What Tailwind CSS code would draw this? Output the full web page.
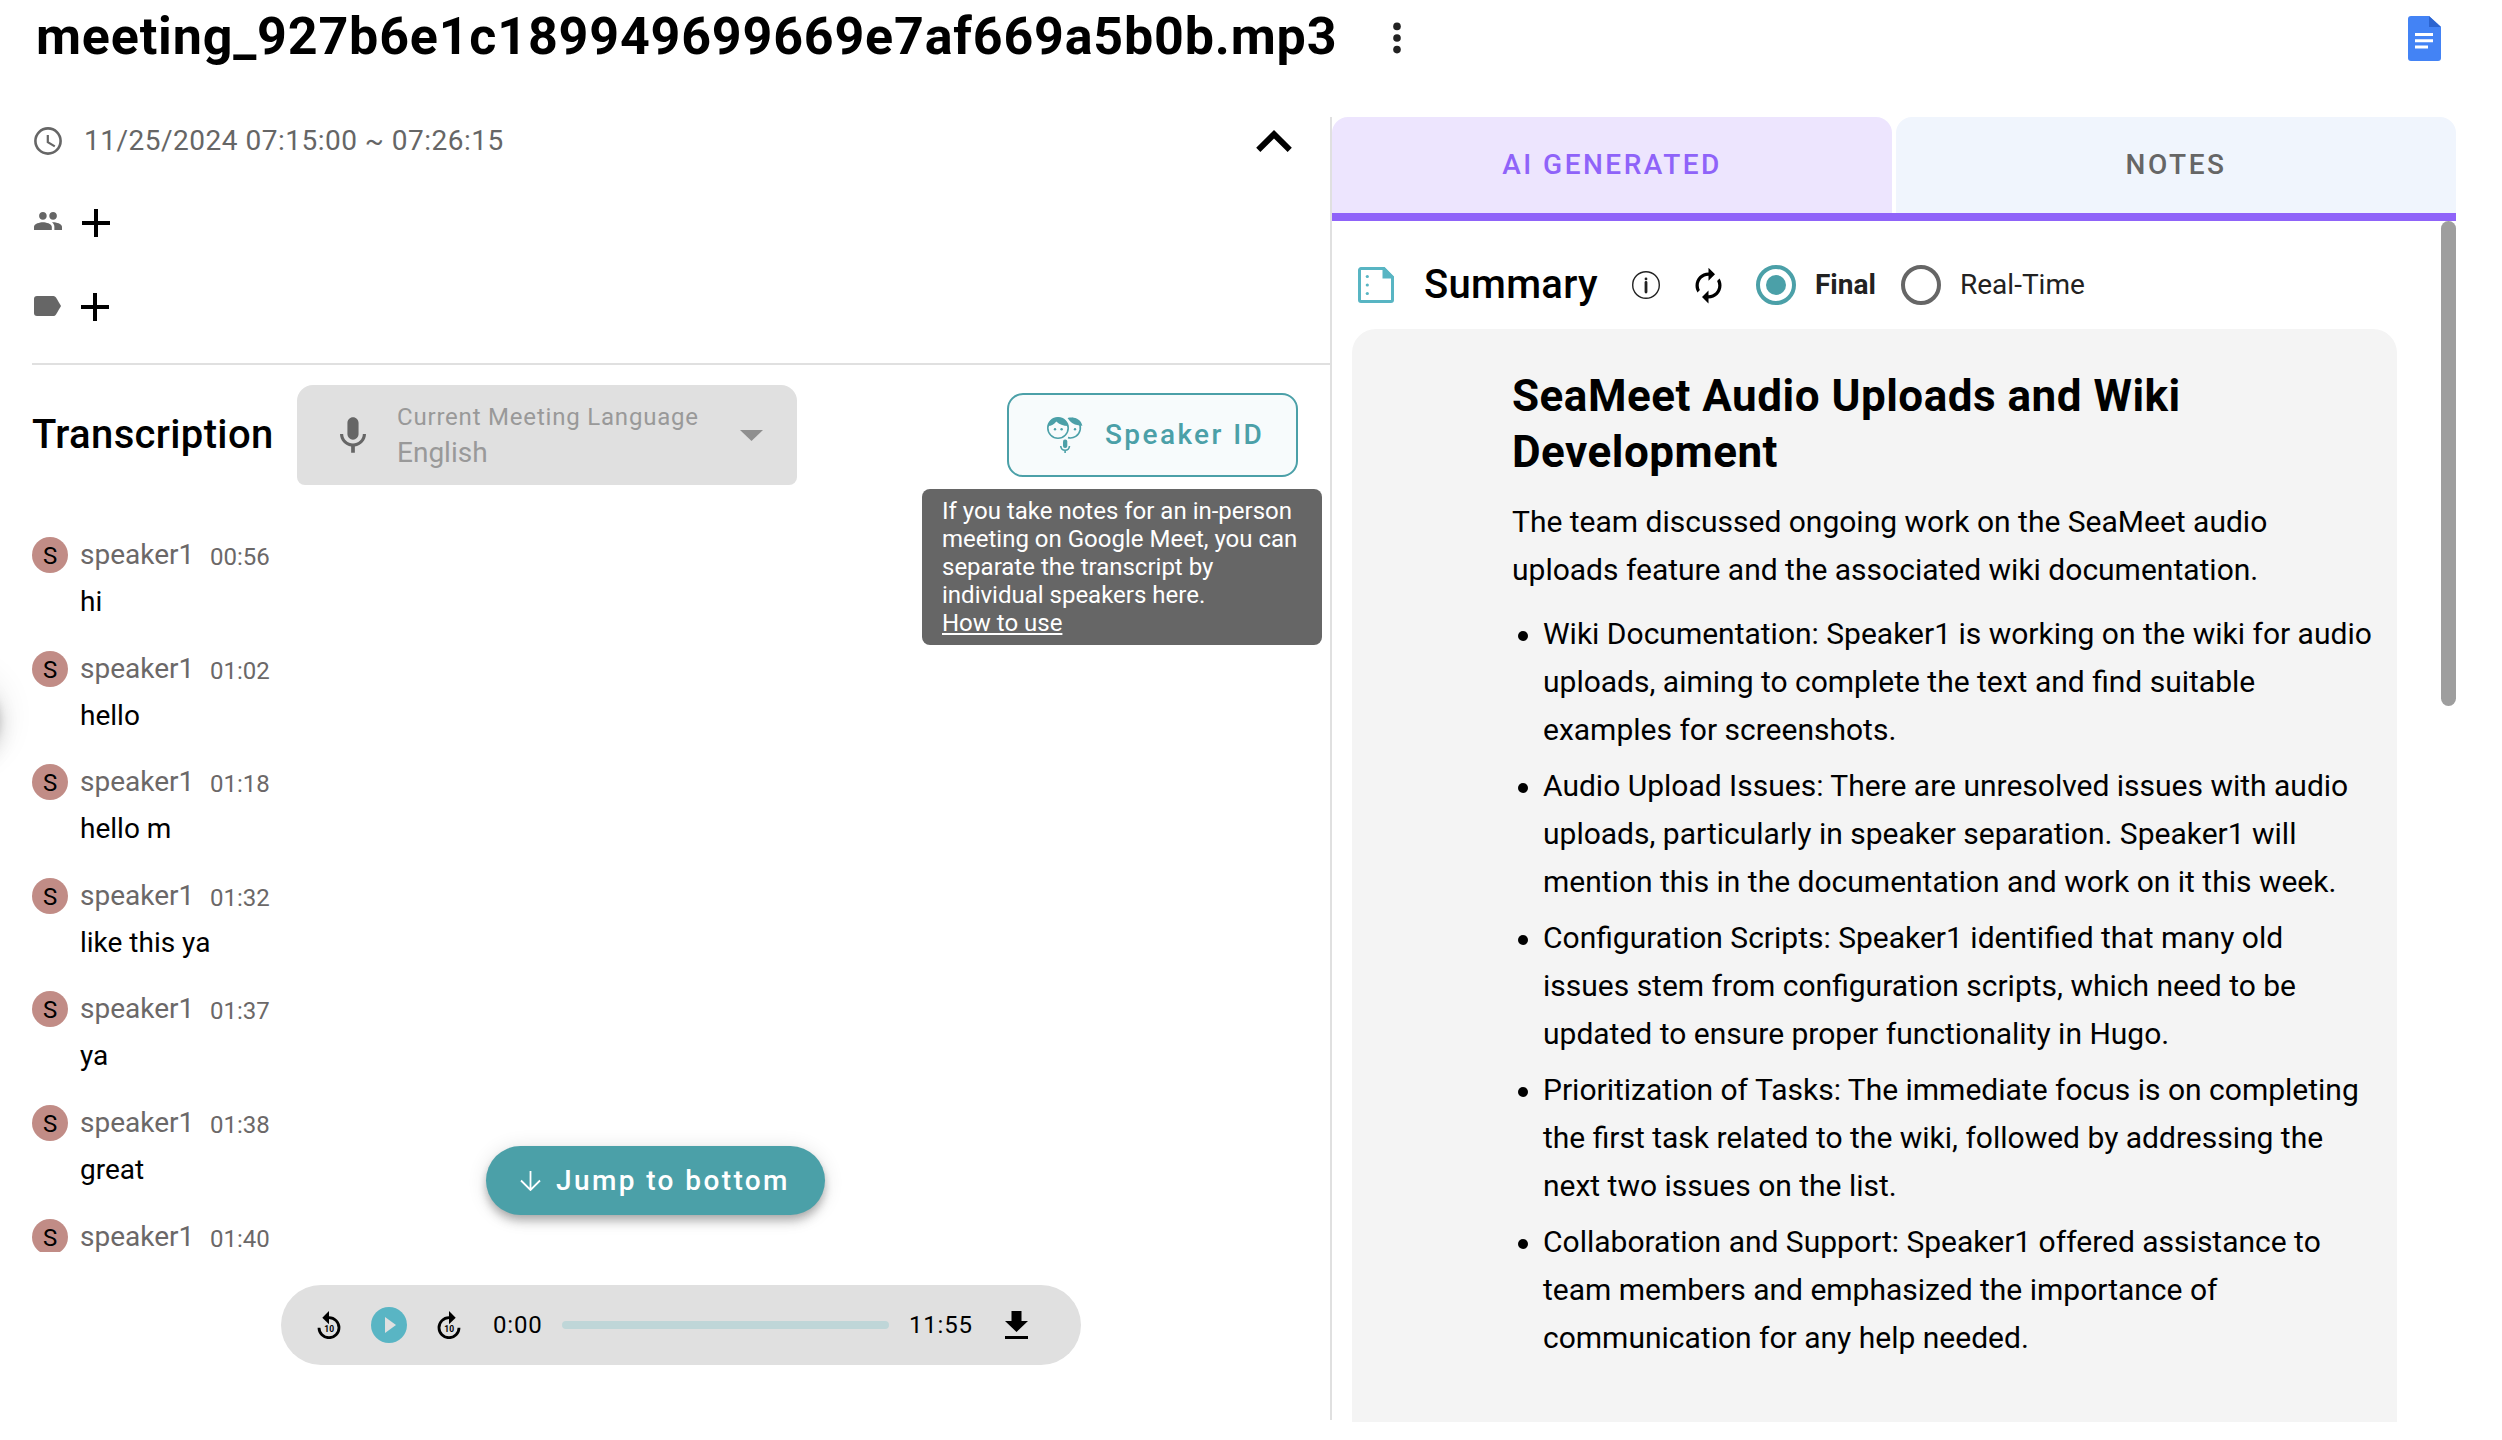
<!DOCTYPE html>
<html lang="en">
<head>
<meta charset="utf-8">
<title>SeaMeet</title>
<script src="https://cdn.jsdelivr.net/npm/@tailwindcss/browser@4"></script>
</head>
<body class="relative h-[1440px] w-[2502px] overflow-hidden bg-white font-[Roboto,sans-serif] text-black">

<!-- Header -->
<header class="flex h-[117px] items-start pl-9 pr-[61px]">
  <div class="flex h-[74px] w-full items-center">
    <h1 class="text-[52px] leading-[60px] font-bold tracking-[0.82px] whitespace-nowrap">meeting_927b6e1c189949699669e7af669a5b0b.mp3</h1>
    <svg class="mt-0.5 ml-9 size-12 fill-[#222]" viewBox="0 0 24 24"><circle cx="12" cy="6.2" r="1.9"/><circle cx="12" cy="12" r="1.9"/><circle cx="12" cy="17.8" r="1.9"/></svg>
    <svg class="mt-0.5 ml-auto h-[45px] w-[33px]" viewBox="0 0 33 45"><path d="M3 0H21L33 11V42a3 3 0 0 1-3 3H3a3 3 0 0 1-3-3V3a3 3 0 0 1 3-3z" fill="#4383f5"/><path d="M21 0L33 11H21z" fill="#2c64d0"/><path d="M7 18.5H25M7 24.7H25M7 31H20" stroke="#fff" stroke-width="3"/></svg>
  </div>
</header>

<div class="flex items-start">
  <!-- Left column -->
  <main class="h-[1303px] w-[1332px] shrink-0 border-r-2 border-[#e0e0e0]">
    <section class="ml-8 h-[248px] border-b-2 border-[#e0e0e0] pl-0.5">
      <div class="flex h-12 items-center pr-[38px]">
        <svg class="size-7" viewBox="0 0 28 28" fill="none" stroke="#666" stroke-width="2.6"><circle cx="14" cy="14" r="12.6"/><path d="M13.8 8v7.2l7 4.2" stroke-width="2.2"/></svg>
        <span class="ml-[22px] text-[28px] leading-10 tracking-[0.5px] text-[#666]">11/25/2024 07:15:00 ~ 07:26:15</span>
        <svg class="ml-auto h-[22px] w-9" viewBox="6 8 12 7.41"><path d="M12 8l-6 6 1.41 1.41L12 10.83l4.59 4.58L18 14z"/></svg>
      </div>
      <div class="mt-7 flex h-14 items-center">
        <svg class="h-[18px] w-7" viewBox="1 5 22 14" fill="#666"><path d="M16 11c1.66 0 2.99-1.34 2.99-3S17.66 5 16 5s-3 1.34-3 3 1.34 3 3 3zm-8 0c1.66 0 2.99-1.34 2.99-3S9.66 5 8 5 5 6.34 5 8s1.340 3 3 3zm0 2c-2.33 0-7 1.17-7 3.500V19h14v-2.500c0-2.330-4.670-3.500-7-3.500zm8 0c-.29 0-.62.02-.97.05 1.160.84 1.970 1.970 1.970 3.450V19h6v-2.500c0-2.330-4.670-3.500-7-3.500z"/></svg>
        <svg class="mt-1 ml-5 size-7" viewBox="0 0 28 28" stroke="#000" stroke-width="4"><path d="M14 0v28M0 14h28"/></svg>
      </div>
      <div class="mt-[29px] flex h-14 items-center">
        <svg class="h-5 w-[27px]" viewBox="0 0 27 20" fill="#666"><path d="M3 0h16.500q1.500 0 2.500 1.500L27 10l-5 8.500q-1 1.500-2.500 1.500H3a3 3 0 0 1-3-3V3a3 3 0 0 1 3-3z"/></svg>
        <svg class="mt-0.5 ml-5 size-7" viewBox="0 0 28 28" stroke="#000" stroke-width="4"><path d="M14 0v28M0 14h28"/></svg>
      </div>
    </section>

    <section class="flex h-[140px] items-center pr-8 pl-8">
      <h2 class="w-[265px] text-[40px] leading-[56px] font-medium tracking-[0.35px]">Transcription</h2>
      <div class="flex h-[100px] w-[500px] items-center rounded-t-2xl rounded-b-lg bg-[#e0e0e0] pr-[34px] pl-[43px]">
        <svg class="h-9 w-[26px]" viewBox="5 2 14 19" fill="#666"><path d="M12 14c1.660 0 2.990-1.340 2.990-3L15 5c0-1.660-1.340-3-3-3S9 3.340 9 5v6c0 1.660 1.340 3 3 3zm5.300-3c0 3-2.540 5.100-5.300 5.100S6.700 14 6.700 11H5c0 3.410 2.720 6.230 6 6.720V21h2v-3.280c3.280-.48 6-3.300 6-6.720h-1.700z"/></svg>
        <div class="ml-[31px] text-[#999]">
          <div class="text-2xl leading-9 tracking-[0.8px]">Current Meeting Language</div>
          <div class="text-[28px] leading-9">English</div>
        </div>
        <svg class="ml-auto h-[11px] w-[23px] fill-[#8f8f8f]" viewBox="0 0 23 11"><path d="M0 0h23L11.500 11z"/></svg>
      </div>
      <button class="ml-auto flex h-[84px] w-[291px] items-center rounded-2xl border-2 border-[#4ba0a8] bg-[#f7fbfc] pl-[38px] text-[#4ba0a8]">
        <svg class="size-9 shrink-0" viewBox="0 0 36 36" fill="none" stroke="currentColor" stroke-width="1.6">
          <circle cx="11" cy="11" r="10.200"/>
          <path d="M24.800 1.200A9.900 9.900 0 1 1 21 20.600"/>
          <path d="M.8 9C2 3.500 6 .4 11 .4S20 3.800 21.300 9C16 9 12.500 7.300 9.300 4.500 7.500 7 4.500 9 .8 9zM20.500 1C28-.8 34 2.500 35.400 8.700 30 8.800 25.500 6.800 22.800 4z" fill="currentColor" stroke="none"/>
          <g fill="currentColor" stroke="none"><circle cx="8" cy="12.300" r="1.200"/><circle cx="14.600" cy="12.300" r="1.200"/><circle cx="28" cy="12.300" r="1.200"/><rect x="16" y="22.500" width="4.300" height="8.500" rx="2"/></g>
          <path d="M13.700 29c.3 2.700 2 4.300 4.400 4.300s4.100-1.600 4.400-4.300M18.100 33.300V36"/>
        </svg>
        <span class="ml-[22px] text-[28px] leading-10 font-medium tracking-[2.4px] whitespace-nowrap">Speaker ID</span>
      </button>
    </section>

    <!-- Transcript list, cut off at the scroll edge -->
    <section id="transcript" class="ml-8 h-[747px] overflow-hidden pt-8"></section>

    <!-- Audio player -->
    <section class="mt-[33px] ml-[281px] flex h-20 w-[800px] items-center rounded-full bg-[#e0e0e0] pl-9">
      <svg class="h-7 w-6" viewBox="0 0 24 28"><path d="M2 16.700A10 10 0 1 0 12 6.700" fill="none" stroke="#000" stroke-width="2.800"/><path d="M5.300 6.700L12 0v13.300z"/><text x="12.200" y="20.700" text-anchor="middle" font-size="8.500" font-weight="700">10</text></svg>
      <svg class="ml-[30px] size-9" viewBox="0 0 36 36"><circle cx="18" cy="18" r="18" fill="#59b5c4"/><path d="M14 10v16l11-8z" fill="#e0e0e0"/></svg>
      <svg class="ml-[30px] h-7 w-6" viewBox="0 0 24 28"><path d="M22 16.700A10 10 0 1 1 12 6.700" fill="none" stroke="#000" stroke-width="2.800"/><path d="M18.700 6.700L12 0v13.300z"/><text x="12.200" y="20.700" text-anchor="middle" font-size="8.500" font-weight="700">10</text></svg>
      <span class="ml-8 w-[69px] text-2xl tracking-[0.8px]">0:00</span>
      <div class="h-2 w-[327px] rounded-full bg-[#bfd6d8]"></div>
      <span class="ml-5 w-24 text-2xl tracking-[0.8px]">11:55</span>
      <svg class="h-7 w-[23px]" viewBox="0 0 23 28"><path d="M6.500 0h10v10H23L11.500 21 0 10h6.500zM0 25h23v3H0z"/></svg>
    </section>
  </main>

  <!-- Right column -->
  <aside class="w-[1124px] shrink-0">
    <nav class="flex h-[104px] gap-1 border-b-8 border-[#8f63f9] text-[28px] font-medium tracking-[2.5px]">
      <div class="flex flex-1 items-center justify-center rounded-t-2xl bg-[#ede5fe] text-[#8f63f9]">AI GENERATED</div>
      <div class="flex flex-1 items-center justify-center rounded-t-2xl bg-[#f0f5fd] text-[#666]">NOTES</div>
    </nav>
    <div class="flex justify-between">
      <div class="w-[1065px] pl-5">
        <div class="flex h-[108px] items-center pt-5 pl-1.5">
          <svg class="size-9" viewBox="0 0 36 36"><path d="M3 1.500H26L34.500 10V33a1.500 1.500 0 0 1-1.500 1.500H3A1.500 1.500 0 0 1 1.500 33V3A1.500 1.500 0 0 1 3 1.500z" fill="none" stroke="#58b5c3" stroke-width="3"/><path d="M24.500 0H26L36 10v1.500H24.500z" fill="#58b5c3"/><g fill="#58b5c3"><circle cx="9.300" cy="9.500" r="1.600"/><circle cx="9.300" cy="18" r="1.600"/><circle cx="9.300" cy="26.500" r="1.600"/></g></svg>
          <h2 class="ml-[30px] w-52 text-[40px] leading-[56px] font-medium tracking-[0.3px]">Summary</h2>
          <svg class="size-7" viewBox="0 0 28 28" fill="none" stroke="#222"><circle cx="14" cy="14" r="13.300" stroke-width="1.400"/><circle cx="14" cy="7.900" r="1.400" fill="#222" stroke="none"/><path d="M14 11.500V21" stroke-width="2.800" stroke-linecap="round"/></svg>
          <svg class="ml-[29px] size-[39px]" viewBox="0 0 24 24"><path d="M12 6v3l4-4-4-4v3c-4.420 0-8 3.580-8 8 0 1.570.46 3.030 1.240 4.260L6.700 14.800c-.45-.83-.7-1.790-.7-2.800 0-3.310 2.690-6 6-6zm6.760 1.740L17.300 9.200c.44.84.7 1.790.7 2.800 0 3.310-2.690 6-6 6v-3l-4 4 4 4v-3c4.420 0 8-3.580 8-8 0-1.570-.46-3.030-1.240-4.260z"/></svg>
          <span class="ml-7 flex size-10 items-center justify-center rounded-full border-4 border-[#4ba0a8]"><span class="size-5 rounded-full bg-[#4ba0a8]"></span></span>
          <span class="ml-[19px] w-[86px] text-[28px] leading-10 font-bold text-[#222]">Final</span>
          <span class="size-10 rounded-full border-4 border-[#666]"></span>
          <span class="ml-[19px] text-[28px] leading-10 text-[#222]">Real-Time</span>
        </div>
        <article class="h-[1093px] rounded-t-3xl bg-[#f4f4f4] pt-[39px] pl-40 whitespace-nowrap">
          <h3 class="text-[44px] leading-[56px] font-bold tracking-[0.5px]">SeaMeet Audio Uploads and Wiki<br>Development</h3>
          <p class="mt-[18px] text-[30px] leading-[48px]">The team discussed ongoing work on the SeaMeet audio<br>uploads feature and the associated wiki documentation.</p>
          <ul class="mt-4 flex flex-col gap-2 text-[30px] leading-[48px]">
            <li class="flex"><span class="mt-[21px] mr-[15px] ml-1.5 size-2.5 rounded-full bg-black"></span><span>Wiki Documentation: Speaker1 is working on the wiki for audio<br>uploads, aiming to complete the text and find suitable<br>examples for screenshots.</span></li>
            <li class="flex"><span class="mt-[21px] mr-[15px] ml-1.5 size-2.5 rounded-full bg-black"></span><span>Audio Upload Issues: There are unresolved issues with audio<br>uploads, particularly in speaker separation. Speaker1 will<br>mention this in the documentation and work on it this week.</span></li>
            <li class="flex"><span class="mt-[21px] mr-[15px] ml-1.5 size-2.5 rounded-full bg-black"></span><span>Configuration Scripts: Speaker1 identified that many old<br>issues stem from configuration scripts, which need to be<br>updated to ensure proper functionality in Hugo.</span></li>
            <li class="flex"><span class="mt-[21px] mr-[15px] ml-1.5 size-2.5 rounded-full bg-black"></span><span>Prioritization of Tasks: The immediate focus is on completing<br>the first task related to the wiki, followed by addressing the<br>next two issues on the list.</span></li>
            <li class="flex"><span class="mt-[21px] mr-[15px] ml-1.5 size-2.5 rounded-full bg-black"></span><span>Collaboration and Support: Speaker1 offered assistance to<br>team members and emphasized the importance of<br>communication for any help needed.</span></li>
          </ul>
        </article>
      </div>
      <div class="h-[485px] w-[15px] rounded-full bg-[#9e9e9e]"></div>
    </div>
  </aside>
</div>

<!-- Speaker ID tooltip -->
<div class="absolute top-[489px] left-[922px] h-[156px] w-[400px] rounded-lg bg-[#666] px-5 py-2 text-2xl leading-7 whitespace-nowrap text-white">If you take notes for an in-person<br>meeting on Google Meet, you can<br>separate the transcript by<br>individual speakers here.<br><span class="underline">How to use</span></div>

<!-- Jump button -->
<button class="absolute top-[1146px] left-[486px] flex h-[69px] w-[339px] items-center rounded-full bg-[#4ba0a8] pl-[34px] text-white shadow-[0_4px_8px_-2px_rgba(0,0,0,0.2),0_8px_10px_rgba(0,0,0,0.14),0_2px_20px_rgba(0,0,0,0.12)]">
  <svg class="h-5 w-[21px]" viewBox="0 0 21 20" fill="none" stroke="#fff" stroke-width="1.800"><path d="M10.500 0v19M1 9.500l9.500 9.500L20 9.500"/></svg>
  <span class="ml-[15px] text-[28px] leading-10 font-medium tracking-[2.4px] whitespace-nowrap">Jump to bottom</span>
</button>

<!-- Off-canvas drawer handle: only its shadow shows -->
<div class="absolute top-[674px] -left-20 size-20 rounded-full bg-white shadow-[0_6px_10px_-2px_rgba(0,0,0,0.2),0_12px_20px_rgba(0,0,0,0.14),0_2px_36px_rgba(0,0,0,0.12)]"></div>

<script>
const lines = [["00:56","hi"],["01:02","hello"],["01:18","hello m"],["01:32","like this ya"],["01:37","ya"],["01:38","great"],["01:40",""]];
document.getElementById("transcript").innerHTML = lines.map(([time, text]) => `
  <div class="h-[113.6px]">
    <div class="flex h-9 items-center">
      <span class="flex size-9 items-center justify-center rounded-full bg-[#c18c86] pt-0.5 text-2xl">S</span>
      <span class="ml-3 w-[130px] text-[28px] leading-9 text-[#6b6868]">speaker1</span>
      <span class="pt-1 text-2xl leading-9 text-[#6b6868]">${time}</span>
    </div>
    <p class="mt-[9px] ml-12 text-[28px] leading-10">${text}</p>
  </div>`).join("");
</script>
</body>
</html>
